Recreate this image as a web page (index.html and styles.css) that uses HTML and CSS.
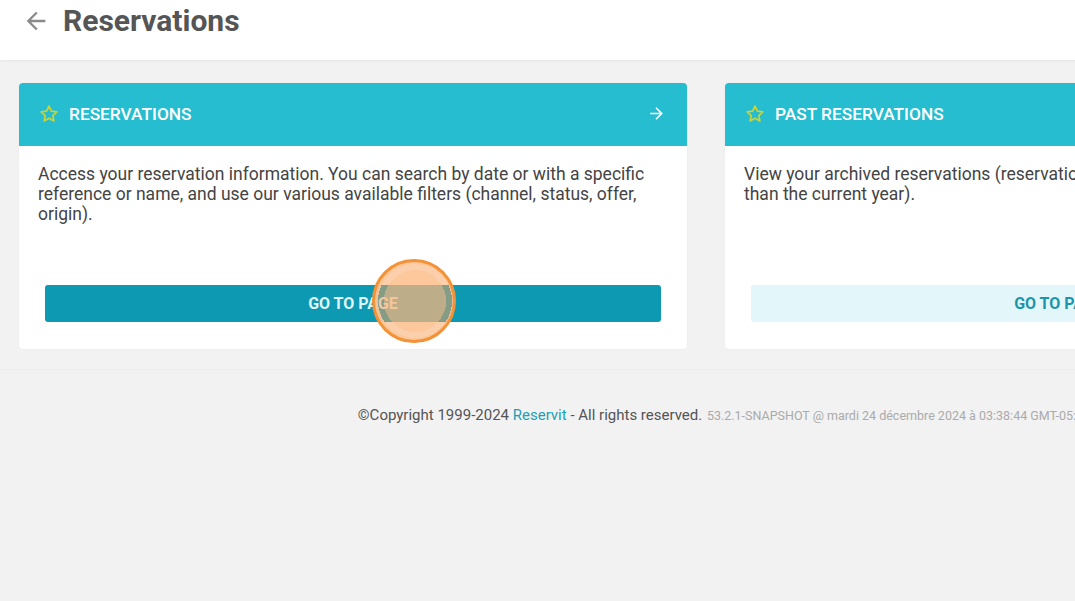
FILE: index.html
```html
<!DOCTYPE html>
<html lang="en">
<head>
    <meta charset="UTF-8" />
    <meta name="viewport" content="width=device-width, initial-scale=1.0" />
    <title>Reservations</title>
    <link rel="stylesheet" href="styles.css">
</head>
<body>
    <div class="page">
        <header class="topbar">
            <svg class="back" width="28" height="28" viewBox="0 0 24 24"><path d="M20 11H7.83l5.59-5.59L12 4l-8 8 8 8 1.41-1.41L7.83 13H20v-2z" fill="currentColor"/></svg>
            <h1>Reservations</h1>
        </header>

        <main class="cards">
            <section class="card">
                <div class="card-head">
                    <svg class="star" width="22" height="22" viewBox="0 0 24 24"><path d="M12 3.4l2.6 5.4 5.9.8-4.3 4.1 1.1 5.8L12 16.7l-5.3 2.8 1.1-5.8-4.3-4.1 5.9-.8z" fill="none" stroke="currentColor" stroke-width="1.9" stroke-linejoin="round"/></svg>
                    <span class="card-title">Reservations</span>
                    <svg class="go" width="19" height="19" viewBox="0 0 24 24"><path d="M12 4l-1.41 1.41L16.17 11H4v2h12.17l-5.58 5.59L12 20l8-8z" fill="currentColor"/></svg>
                </div>
                <div class="card-body">
                    <p>Access your reservation information. You can search by date or with a specific reference or name, and use our various available filters (channel, status, offer, origin).</p>
                    <button class="btn">Go to page</button>
                </div>
            </section>

            <section class="card">
                <div class="card-head">
                    <svg class="star" width="22" height="22" viewBox="0 0 24 24"><path d="M12 3.4l2.6 5.4 5.9.8-4.3 4.1 1.1 5.8L12 16.7l-5.3 2.8 1.1-5.8-4.3-4.1 5.9-.8z" fill="none" stroke="currentColor" stroke-width="1.9" stroke-linejoin="round"/></svg>
                    <span class="card-title">Past reservations</span>
                    <svg class="go" width="19" height="19" viewBox="0 0 24 24"><path d="M12 4l-1.41 1.41L16.17 11H4v2h12.17l-5.58 5.59L12 20l8-8z" fill="currentColor"/></svg>
                </div>
                <div class="card-body">
                    <p>View your archived reservations (reservations with a departure date earlier<br>than the current year).</p>
                    <button class="btn btn-light">Go to page</button>
                </div>
            </section>
        </main>

        <footer class="footer">
            ©Copyright 1999-2024 <a href="#">Reservit</a> - All rights reserved.
            <span class="version">53.2.1-SNAPSHOT @ mardi 24 décembre 2024 à 03:38:44 GMT-05:00</span>
        </footer>

        <div class="click-mark"></div>
    </div>
</body>
</html>
```

FILE: styles.css
```css
html, body {
    margin: 0;
    padding: 0;
    overflow: hidden;
}
body {
    font-family: Roboto, 'Liberation Sans', sans-serif;
    background: #f2f2f2;
    color: #444;
}
.page {
    position: relative;
    width: 1448px;
    min-height: 601px;
}
.topbar {
    display: flex;
    align-items: flex-start;
    height: 60px;
    padding: 1px 0 0 22px;
    box-sizing: border-box;
    background: white;
    box-shadow: 0 1px 3px rgba(0,0,0,0.06);
}
.back {
    color: #8a8a8a;
    margin: 6px 13px 0 0;
}
.topbar h1 {
    margin: 0;
    font-size: 30px;
    line-height: 40px;
    font-weight: 700;
    color: #555;
}
.cards {
    display: grid;
    grid-template-columns: 668px 668px;
    gap: 38px;
    padding: 23px 19px 20px;
    border-bottom: 1px solid #ececec;
}
.card {
    display: flex;
    flex-direction: column;
    background: white;
    border-radius: 4px;
    box-shadow: 0 0 2px rgba(0,0,0,0.06);
    min-height: 266px;
}
.card-head {
    display: flex;
    align-items: center;
    height: 63px;
    padding: 0 21px 2px 19px;
    box-sizing: border-box;
    background: #26bdd0;
    border-radius: 4px 4px 0 0;
    color: white;
}
.star {
    color: #c9d33a;
    margin-right: 9px;
}
.card-title {
    flex: 1;
    font-size: 17.3px;
    font-weight: 500;
    text-transform: uppercase;
}
.go {
    color: white;
}
.card-body {
    flex: 1;
    display: flex;
    flex-direction: column;
    padding: 18px 19px 27px;
}
.card-body p {
    margin: 0;
    font-size: 17.5px;
    line-height: 20px;
    color: #444;
}
.btn {
    margin: auto 7px 0;
    height: 37px;
    border: none;
    border-radius: 3px;
    background: #0e99b3;
    color: #dff5f8;
    font-family: Roboto, 'Liberation Sans', sans-serif;
    font-size: 16px;
    font-weight: 700;
    text-transform: uppercase;
    cursor: pointer;
}
.btn-light {
    background: #e3f6f9;
    color: #1c95aa;
}
.footer {
    padding-top: 36px;
    text-align: center;
    font-size: 15px;
    color: #555;
}
.footer a {
    color: #1f9fb3;
    text-decoration: none;
}
.version {
    font-size: 12.5px;
    color: #aaa;
    margin-left: 1px;
}
.click-mark {
    position: absolute;
    left: 372px;
    top: 259px;
    width: 84px;
    height: 84px;
    box-sizing: border-box;
    border: 3px solid #f39237;
    border-radius: 50%;
    background: radial-gradient(circle at 40px 39px,
        rgba(251, 181, 121, 0.74) 0 31px,
        rgba(250, 160, 90, 0.5) 31px 37px,
        rgba(252, 196, 148, 0.95) 37px);
}
```
